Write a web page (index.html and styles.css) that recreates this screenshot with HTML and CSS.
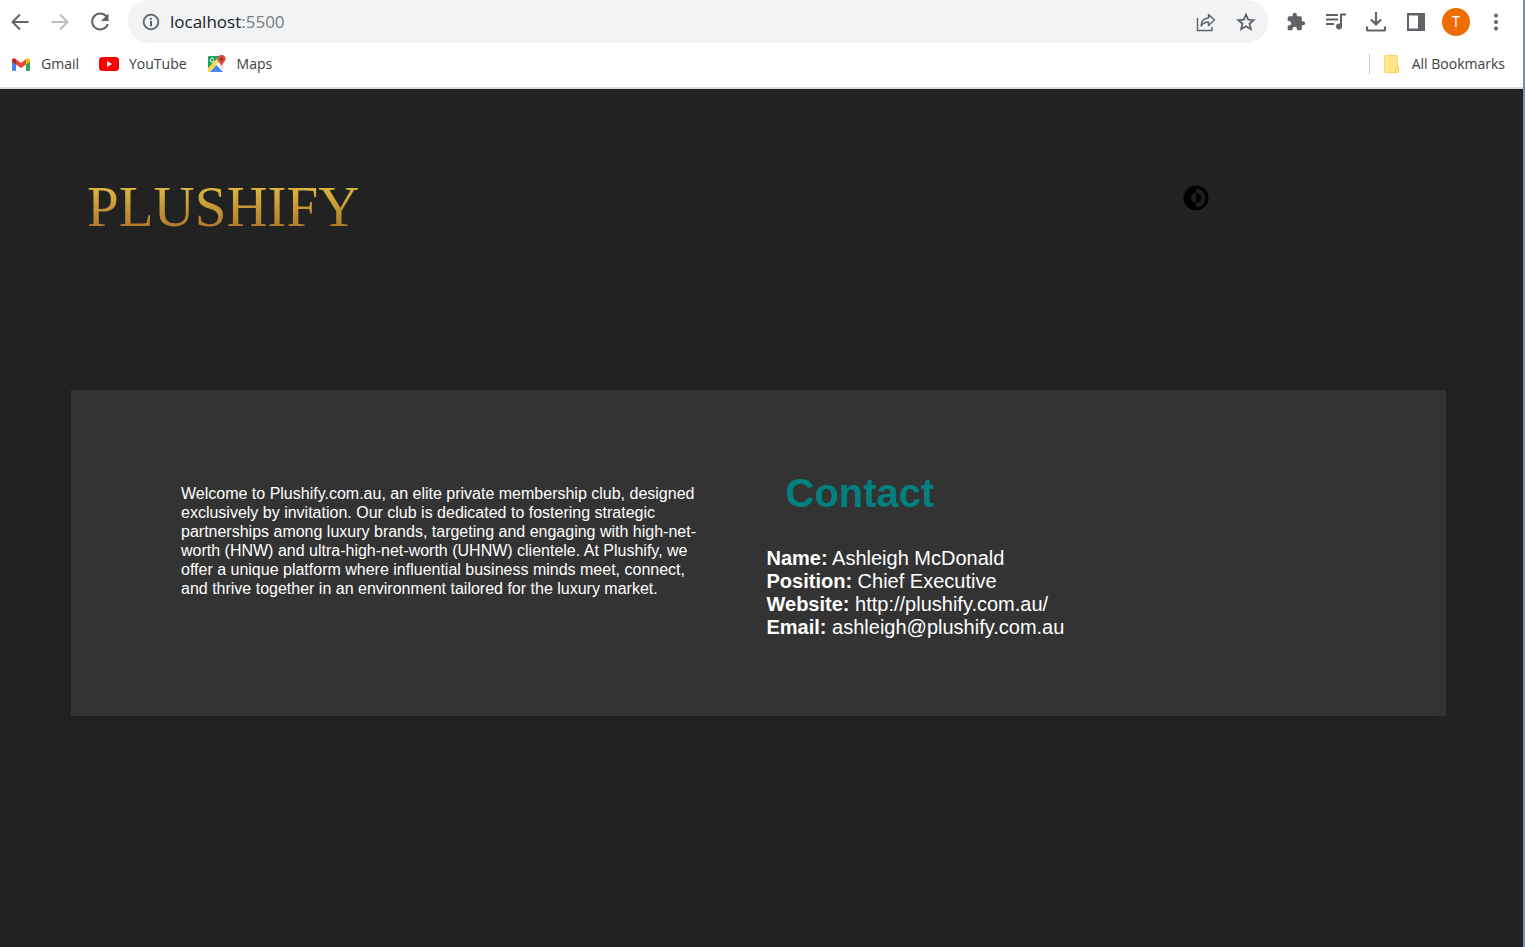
FILE: index.html
```html
<!DOCTYPE html>
<html lang="en">
<head>
<meta charset="utf-8">
<meta name="viewport" content="width=device-width, initial-scale=1">
<title>Plushify</title>
<link rel="stylesheet" href="styles.css">
</head>
<body>
<div class="window">
  <div class="browser">
    <div class="toolbar">
      <button class="icon-btn" type="button" aria-label="Back"><svg width="24" height="24" viewBox="0 0 24 24"><path d="M20.500 12H5M12 4.500 4.500 12 12 19.500" fill="none" stroke="#5f6368" stroke-width="2"/></svg></button>
      <button class="icon-btn" type="button" aria-label="Forward"><svg width="24" height="24" viewBox="0 0 24 24"><path d="M3.500 12H19M12 4.500 19.500 12 12 19.500" fill="none" stroke="#babcbe" stroke-width="2"/></svg></button>
      <button class="icon-btn" type="button" aria-label="Reload"><svg width="24" height="24" viewBox="0 0 24 24"><path d="M18.500 6.500A8 8 0 1 0 19.800 14" fill="none" stroke="#5f6368" stroke-width="2"/><path d="M20.500 3.500V11H13z" fill="#5f6368"/></svg></button>
      <div class="address">
        <svg width="22" height="22" viewBox="0 0 24 24" aria-hidden="true"><circle cx="12" cy="12" r="8" fill="none" stroke="#5f6368" stroke-width="2"/><path d="M12 11v5.500M12 7.500v2" stroke="#5f6368" stroke-width="2.200"/></svg>
        <span class="url">localhost<span class="port">:5500</span></span>
        <button class="icon-btn" type="button" aria-label="Share"><svg width="24" height="24" viewBox="0 0 24 24"><path d="M3.500 8v12.500H18V17M7 16c.4-5 3-8 7.500-8V4.500l6 5.500-6 5.500V12c-3.500 0-5.500 1-7.500 4z" fill="none" stroke="#5f6368" stroke-width="1.400" stroke-linejoin="round"/></svg></button>
        <button class="icon-btn" type="button" aria-label="Bookmark this page"><svg width="24" height="24" viewBox="0 0 24 24"><path d="m12 4.500 2.200 5.100 5.500.5-4.200 3.600 1.300 5.500L12 16.300l-4.800 2.900 1.300-5.500-4.200-3.600 5.500-.5z" fill="none" stroke="#5f6368" stroke-width="1.800"/></svg></button>
      </div>
      <div class="actions">
        <button class="icon-btn" type="button" aria-label="Extensions"><svg width="20" height="20" viewBox="0 0 24 24"><path fill="#5f6368" d="M20.500 11H19V7c0-1.100-.9-2-2-2h-4V3.500a2.500 2.500 0 0 0-5 0V5H4c-1.100 0-2 .9-2 2v3.800h1.500a2.700 2.700 0 0 1 0 5.400H2V20c0 1.100.9 2 2 2h3.800v-1.500a2.700 2.700 0 0 1 5.400 0V22H17c1.100 0 2-.9 2-2v-4h1.500a2.500 2.500 0 0 0 0-5z"/></svg></button>
        <button class="icon-btn" type="button" aria-label="Media controls"><svg width="24" height="24" viewBox="0 0 24 24"><path d="M2 5h12M2 9.500h12M2 14h8M17 16V4.500h5" fill="none" stroke="#5f6368" stroke-width="2"/><circle cx="15" cy="16.500" r="3" fill="#5f6368"/></svg></button>
        <button class="icon-btn" type="button" aria-label="Downloads"><svg width="24" height="24" viewBox="0 0 24 24"><path d="M12 2v12M7 9.500l5 5 5-5" fill="none" stroke="#5f6368" stroke-width="2.200"/><path d="M3 16.500v2.500q0 1.500 1.500 1.500h15q1.500 0 1.500-1.500v-2.500" fill="none" stroke="#5f6368" stroke-width="2.200"/></svg></button>
        <button class="icon-btn" type="button" aria-label="Side panel"><svg width="24" height="24" viewBox="0 0 24 24"><path fill="#5f6368" fill-rule="evenodd" d="M3 3h18v18H3zM5 5.500v13h9v-13z"/></svg></button>
        <button class="avatar" type="button" aria-label="Profile T">T</button>
        <button class="icon-btn" type="button" aria-label="Menu"><svg width="24" height="24" viewBox="0 0 24 24" fill="#5f6368"><circle cx="12" cy="5.500" r="2"/><circle cx="12" cy="12" r="2"/><circle cx="12" cy="18.500" r="2"/></svg></button>
      </div>
    </div>
    <nav class="bookmarks" aria-label="Bookmarks">
      <a class="bookmark" href="#gmail"><svg width="20" height="20" viewBox="0 0 20 20" aria-hidden="true"><path fill="#4285f4" d="M1 6l4 3v8H2.500Q1 17 1 15.500z"/><path fill="#34a853" d="M15 9l4-3v9.500q0 1.500-1.500 1.500H15z"/><path fill="#fbbc04" d="M15 5.300l1-.8q1.500-.8 3 1v2L15 10.500z"/><path fill="#ea4335" d="M5 5.300l5 3.800 5-3.800v5.200L10 14l-5-3.500z"/><path fill="#c5221f" d="M5 5.300 4 4.500Q2.500 3.700 1 5.500v2l4 3z"/></svg>Gmail</a>
      <a class="bookmark" href="#youtube"><svg width="20" height="20" viewBox="0 0 20 20" aria-hidden="true"><rect y="3" width="20" height="14" rx="3.500" fill="#f00"/><path d="M8 7v6l5-3z" fill="#fff"/></svg>YouTube</a>
      <a class="bookmark" href="#maps"><svg width="20" height="20" viewBox="0 0 20 20" aria-hidden="true"><rect x="1" y="2" width="16" height="16" rx="1.500" fill="#e4e6e8"/><path d="M1 17V3.500Q1 2 2.500 2H14L1 17z" fill="#1ea362"/><path d="M1 14 12 2.500l2 3L3 18H1z" fill="#ffd84a"/><path d="M1 3.500Q1 2 2.500 2h8.500L1 12.500z" fill="#1ea362"/><path d="M3 18l6.500-7L16 18z" fill="#4a89f3"/><path d="M9.500 9.500l8 8" stroke="#fff" stroke-width="1.200"/><path d="M7 5.200a2 2 0 1 0 .2 1.800H5.500" fill="none" stroke="#fff"/><path d="M14.500 13c0-4-4-4.500-4-8a4 4 0 0 1 8 0c0 3.500-4 4-4 8z" fill="#dd4b3e"/><circle cx="14.500" cy="5" r="1.500" fill="#822f2b"/></svg>Maps</a>
      <a class="bookmark all" href="#all"><svg width="20" height="20" viewBox="0 0 20 20" aria-hidden="true"><path d="M4 1.500h10q1.500 0 1.500 1.500v15.500H4q-1.500 0-1.500-1.500V3Q2.500 1.500 4 1.500z" fill="#ffe58b" stroke="#fbd75b"/><rect x="13.500" y="13" width="3" height="5.500" rx="1" fill="#ffe58b" stroke="#f5cc4b"/></svg>All Bookmarks</a>
    </nav>
  </div>
  <div class="page">
    <header class="site-header">
      <a class="logo" href="#home">PLUSHIFY</a>
      <button class="theme" type="button" aria-label="Toggle theme"><svg width="26" height="26" viewBox="0 0 26 26"><circle cx="13" cy="13" r="12.500" fill="#000"/><path d="M13 3.500a9.500 9.500 0 0 1 0 19V18a5 5 0 0 0 0-10z" fill="#1d1d1d"/><path d="M13 8a5 5 0 0 0 0 10z" fill="#1d1d1d"/></svg></button>
    </header>
    <main class="card">
      <p class="intro">Welcome to Plushify.com.au, an elite private membership club, designed exclusively by invitation. Our club is dedicated to fostering strategic partnerships among luxury brands, targeting and engaging with high-net-worth (HNW) and ultra-high-net-worth (UHNW) clientele. At Plushify, we offer a unique platform where influential business minds meet, connect, and thrive together in an environment tailored for the luxury market.</p>
      <section class="contact">
        <h1 class="contact-title">Contact</h1>
        <ul class="details">
          <li><strong>Name:</strong> Ashleigh McDonald</li>
          <li><strong>Position:</strong> Chief Executive</li>
          <li><strong>Website:</strong> <a href="http://plushify.com.au/">http://plushify.com.au/</a></li>
          <li><strong>Email:</strong> <a href="mailto:ashleigh@plushify.com.au">ashleigh@plushify.com.au</a></li>
        </ul>
      </section>
    </main>
  </div>
</div>
</body>
</html>
```
FILE: styles.css
```css
* { box-sizing: border-box; }
body { margin: 0; font-family: "Liberation Sans", Arial, sans-serif; }
a { color: inherit; text-decoration: none; }
button { border: 0; padding: 0; background: none; font: inherit; cursor: pointer; }
svg { display: block; flex: none; }

.window {
  display: flex;
  flex-direction: column;
  min-height: 100vh;
  border-right: 2px solid #7393ad;
}

.browser {
  background: #fff;
  border-bottom: 2px solid #dadada;
  font-family: "Open Sans", "Noto Sans", sans-serif;
  color: #3c4043;
}
.toolbar { display: flex; align-items: center; padding: 0 15px 0 8px; }
.icon-btn { display: grid; place-items: center; flex: none; width: 24px; height: 24px; }
.toolbar > .icon-btn { margin-right: 16px; }
.address {
  display: flex;
  flex: 1;
  align-items: center;
  gap: 16px;
  height: 43px;
  padding: 0 10px 0 12px;
  border-radius: 22px;
  background: #f1f3f4;
}
.url { flex: 1; margin-left: -8px; font-size: 17px; color: #202124; }
.port { color: #7a7e82; }
.actions { display: flex; align-items: center; gap: 16px; margin-left: 16px; }
.avatar {
  width: 28px;
  height: 28px;
  margin: 0 -2px;
  border-radius: 50%;
  background: #ef6c00;
  color: #fff;
  font-family: Roboto, sans-serif;
  font-size: 14px;
}

.bookmarks { display: flex; align-items: center; gap: 20px; padding: 11px 18px 13px 11px; font-size: 14px; line-height: 20px; }
.bookmark { display: flex; align-items: center; gap: 10px; }
.all { margin-left: auto; padding-left: 12px; border-left: 1px solid #c8cacc; }

.page { flex: 1; padding: 89px 77px 80px 71px; background: #222; }
.site-header {
  display: flex;
  align-items: flex-start;
  justify-content: space-between;
  min-height: 212px;
  padding: 0 17.25% 0 16px;
}
.logo {
  font-family: "Liberation Serif", serif;
  font-size: 57px;
  line-height: 57px;
  background: linear-gradient(#dcb840 15%, #b27a2b 85%);
  background-clip: text;
  -webkit-background-clip: text;
  color: transparent;
}
.theme { margin-top: 7px; }

.card {
  display: grid;
  grid-template-columns: 1fr 1fr;
  gap: 16px;
  padding: 80px 8% 77px;
  background: #333;
  box-shadow: 0 0 10px rgba(0, 0, 0, 0.1);
  color: #fff;
}
.intro { margin: 14px 40px 0 0; font-size: 16px; line-height: 19px; }
.contact-title { margin: 0 0 31px 19px; font-size: 40px; line-height: 46px; color: #008080; }
.details { margin: 0; padding: 0; list-style: none; font-size: 20px; line-height: 23px; }
```
